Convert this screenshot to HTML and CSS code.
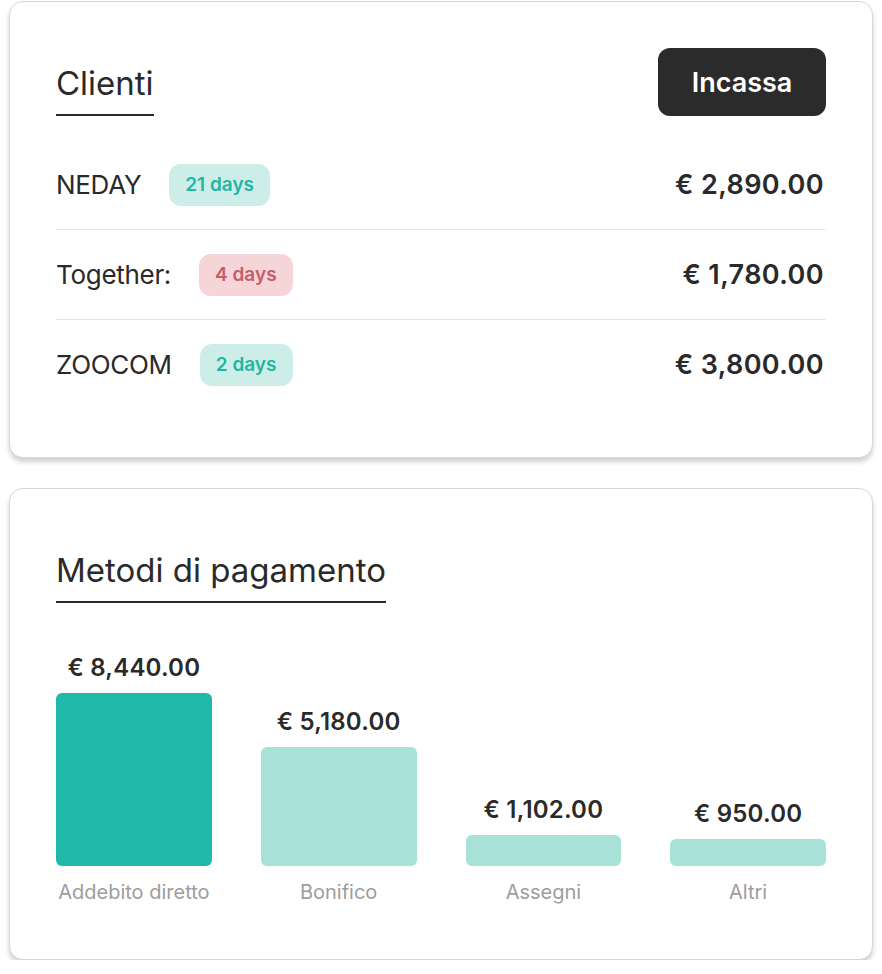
FILE: index.html
```html
<!DOCTYPE html>
<html lang="en">
<head>
    <meta charset="UTF-8">
    <meta name="viewport" content="width=device-width, initial-scale=1.0">
    <title>Clienti e metodi di pagamento</title>
    <link rel="stylesheet" href="styles.css">
</head>
<body>
    <div class="page">
        <section class="card">
            <div class="card-header">
                <h2 class="card-title">Clienti</h2>
                <button class="btn-dark" type="button">Incassa</button>
            </div>

            <ul class="client-list">
                <li class="client-row">
                    <span class="client-name">NEDAY</span>
                    <span class="badge badge-ok">21 days</span>
                    <span class="client-amount">€ 2,890.00</span>
                </li>
                <li class="client-row">
                    <span class="client-name">Together:</span>
                    <span class="badge badge-late">4 days</span>
                    <span class="client-amount">€ 1,780.00</span>
                </li>
                <li class="client-row">
                    <span class="client-name">ZOOCOM</span>
                    <span class="badge badge-ok">2 days</span>
                    <span class="client-amount">€ 3,800.00</span>
                </li>
            </ul>
        </section>

        <section class="card card-chart">
            <div class="card-header">
                <h2 class="card-title">Metodi di pagamento</h2>
            </div>

            <div class="chart">
                <div class="chart-col">
                    <span class="chart-value">€ 8,440.00</span>
                    <div class="chart-bar chart-bar-main" style="height: 173px"></div>
                    <span class="chart-label">Addebito diretto</span>
                </div>
                <div class="chart-col">
                    <span class="chart-value">€ 5,180.00</span>
                    <div class="chart-bar" style="height: 119px"></div>
                    <span class="chart-label">Bonifico</span>
                </div>
                <div class="chart-col">
                    <span class="chart-value">€ 1,102.00</span>
                    <div class="chart-bar" style="height: 31px"></div>
                    <span class="chart-label">Assegni</span>
                </div>
                <div class="chart-col">
                    <span class="chart-value">€ 950.00</span>
                    <div class="chart-bar" style="height: 27px"></div>
                    <span class="chart-label">Altri</span>
                </div>
            </div>
        </section>
    </div>
</body>
</html>
```

FILE: styles.css
```css
body {
    margin: 0;
    font-family: "Inter", "Noto Sans", sans-serif;
    color: #2a2a2a;
    background-color: #fff;
}

.page {
    display: flex;
    flex-direction: column;
    gap: 30px;
    width: 864px;
    padding: 1px 0 0 9px;
}

.card {
    box-sizing: border-box;
    background-color: #fff;
    border: 1px solid #d8d8d8;
    border-radius: 14px;
    box-shadow: 0 4px 5px rgba(0, 0, 0, 0.18);
    padding: 46px 46px 48px;
}

.card-chart {
    padding-bottom: 55px;
}

.card-header {
    display: flex;
    justify-content: space-between;
    align-items: flex-end;
    height: 68px;
}

.card-title {
    margin: 0;
    font-size: 33px;
    font-weight: 400;
    letter-spacing: 0;
    line-height: 38px;
    padding-bottom: 12px;
    border-bottom: 2px solid #2a2a2a;
}

.btn-dark {
    align-self: flex-start;
    height: 68px;
    width: 168px;
    border: none;
    border-radius: 12px;
    background-color: #2b2b2b;
    color: #fff;
    font-family: inherit;
    font-size: 27px;
    font-weight: 600;
    cursor: pointer;
}

.client-list {
    list-style: none;
    margin: 24px 0 0;
    padding: 0;
}

.client-row {
    display: flex;
    align-items: center;
    height: 89px;
    border-bottom: 1px solid #e4e4e4;
}

.client-row:last-child {
    border-bottom: none;
}

.client-name {
    font-size: 26px;
    letter-spacing: -0.3px;
    margin-right: 28px;
}

.client-amount {
    margin-left: auto;
    margin-right: 2px;
    font-size: 27px;
    font-weight: 600;
    letter-spacing: 0.4px;
}

.badge {
    display: inline-flex;
    align-items: center;
    height: 42px;
    padding: 0 16px;
    border-radius: 12px;
    font-size: 19px;
    font-weight: 600;
}

.badge-ok {
    background-color: #cdeee8;
    color: #1fb6a5;
}

.badge-late {
    background-color: #f6d5d8;
    color: #c95a6d;
}

.chart {
    display: grid;
    grid-template-columns: repeat(4, 1fr);
    column-gap: 49px;
    align-items: end;
    margin-top: 51px;
}

.chart-col {
    display: flex;
    flex-direction: column;
    align-items: stretch;
    text-align: center;
}

.chart-value {
    font-size: 24px;
    font-weight: 600;
    letter-spacing: 0.2px;
    line-height: 28px;
    margin-bottom: 11px;
}

.chart-bar {
    border-radius: 6px;
    background-color: #a8e1d8;
}

.chart-bar-main {
    background-color: #1fb9aa;
}

.chart-label {
    margin-top: 14px;
    font-size: 20px;
    line-height: 24px;
    color: #9d9d9d;
}
```
